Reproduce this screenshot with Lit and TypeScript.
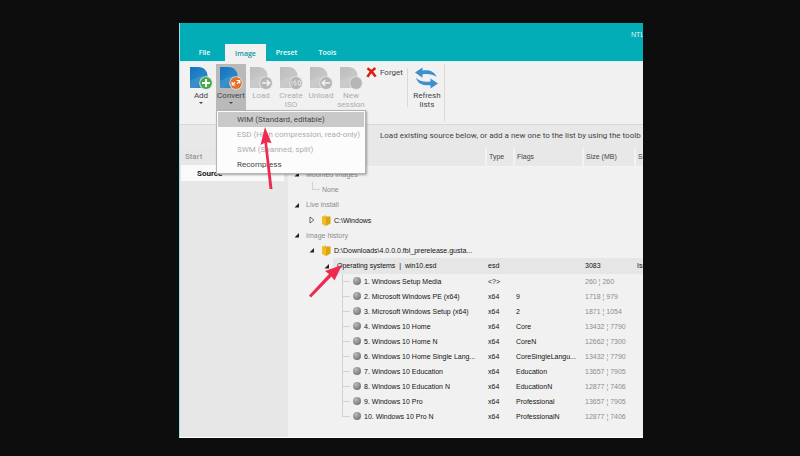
import { LitElement, html, svg, css, nothing } from "lit";
import { customElement } from "lit/decorators.js";
import { classMap } from "lit/directives/class-map.js";

type Row = {
  kind: "group" | "none" | "source" | "set" | "item";
  name: string;
  open?: boolean;
  last?: boolean;
  type?: string;
  flags?: string;
  size?: string;
  extra?: string;
};

const item = (name: string, type: string, flags: string, size: string, last = false): Row => ({
  kind: "item", name, type, flags, size, last,
});

const ROWS: Row[] = [
  { kind: "group", name: "Mounted images", open: true },
  { kind: "none", name: "None" },
  { kind: "group", name: "Live install", open: true },
  { kind: "source", name: "C:\\Windows", open: false },
  { kind: "group", name: "Image history", open: true },
  { kind: "source", name: "D:\\Downloads\\4.0.0.0.fbl_prerelease.gusta...", open: true },
  { kind: "set", name: "Operating systems  |  win10.esd", open: true, type: "esd", size: "3083", extra: "Iso" },
  item("1. Windows Setup Media", "<?>", "", "260 ¦ 260"),
  item("2. Microsoft Windows PE (x64)", "x64", "9", "1718 ¦ 979"),
  item("3. Microsoft Windows Setup (x64)", "x64", "2", "1871 ¦ 1054"),
  item("4. Windows 10 Home", "x64", "Core", "13432 ¦ 7790"),
  item("5. Windows 10 Home N", "x64", "CoreN", "12662 ¦ 7300"),
  item("6. Windows 10 Home Single Lang...", "x64", "CoreSingleLangu...", "13432 ¦ 7790"),
  item("7. Windows 10 Education", "x64", "Education", "13657 ¦ 7905"),
  item("8. Windows 10 Education N", "x64", "EducationN", "12877 ¦ 7406"),
  item("9. Windows 10 Pro", "x64", "Professional", "13657 ¦ 7905"),
  item("10. Windows 10 Pro N", "x64", "ProfessionalN", "12877 ¦ 7406", true),
];

const BADGES: Record<string, unknown> = {
  add: svg`<path d="M16 12v8M12 16h8" stroke="#fff" stroke-width="1.8" />`,
  convert: svg`<path d="M12.500 17.500l2.500-2.300M19.500 14.300l-2.500 2.300M12.200 15v3h3M16.600 13.500h3.200v3" fill="none" stroke="#fff" stroke-width="1.200" />`,
  load: svg`<path d="M12 16h7.5M16.8 13l3 3l-3 3" fill="none" stroke="#f4f4f4" stroke-width="1.4" />`,
  iso: svg`<path d="M12 14v4M16 14h-2v2h2v2h-2M18 14h2.4v4H18z" fill="none" stroke="#eee" stroke-width=".8" />`,
  unload: svg`<path d="M20 16h-7.5M15.2 13l-3 3l3 3" fill="none" stroke="#f4f4f4" stroke-width="1.4" />`,
  session: nothing,
};

const discIcon = (badge: string) => {
  const live = badge === "add" || badge === "convert";
  const round = badge === "add" ? "#45aa48" : badge === "convert" ? "#e5702a" : "#b5b5b5";
  const fade = `fade-${badge}`;
  return html`<svg class="big" viewBox="0 0 23 23" aria-hidden="true">
    <defs>
      <linearGradient id=${fade} x1="0" y1="0" x2="1" y2="1">
        <stop offset="0" stop-color=${live ? "#1673b8" : "#bdbdbd"} />
        <stop offset=".55" stop-color=${live ? "#2485c7" : "#c6c6c6"} />
        <stop offset="1" stop-color=${live ? "#1568aa" : "#bcbcbc"} />
      </linearGradient>
    </defs>
    <path d="M0 0h8.500c5.500 0 9 4 9 9v12H0z" fill="url(#${fade})" />
    <path d="M0 14l8-4l9.500-2v13H0z" fill="#fff" opacity=".1" />
    <circle cx="16" cy="16" r="6.800" fill=${live ? "#d8e4e4" : "#e2e2e2"} />
    <circle cx="16" cy="16" r="5.900" fill=${round} />
    ${BADGES[badge]}
  </svg>`;
};

const refreshIcon = html`<svg class="big" viewBox="0 0 23 23" aria-hidden="true">
  <path d="M0 5.500L7.500 .500v3c6-.8 12 .5 14 6.500c-4-3-8.500-3.300-14-2.700v3.500z" fill="#3f8fcd" />
  <path d="M23 16.500L15.500 11.500v3c-6 .8-11.500 0-14.500-4c1.500 7 8.500 8.300 14.500 7.700v3.300z" fill="#3f8fcd" />
</svg>`;

const crossIcon = html`<svg class="cross" viewBox="0 0 12 12" aria-hidden="true">
  <path d="M1.500 1.500C5 3.500 8 7 10.500 10.500M10.200 1.200C7 3.500 3.500 7 1.500 10.800" fill="none" stroke="#d81e10" stroke-width="2.700" />
</svg>`;

const folderIcon = html`<svg class="folder" viewBox="0 0 9 11" aria-hidden="true">
  <path d="M0 1.500L4 0v9.500L0 9z" fill="#f3cf3e" />
  <path d="M3 1.500h5.500v7L4 11L3 9.500z" fill="#d9a514" />
  <path d="M0 1l4 1.500V11L0 9z" fill="#edbd22" />
</svg>`;

const twisty = (open: boolean) => html`<svg class="twisty" viewBox="0 0 6 8" aria-hidden="true">
  ${open
    ? svg`<path d="M5 2v4.500H.500z" fill="#222" />`
    : svg`<path d="M1 1l3.800 3L1 7z" fill="#fff" stroke="#555" stroke-width=".9" />`}
</svg>`;

const TOOLS = [
  { id: "add", lines: ["Add"], drop: true },
  { id: "convert", lines: ["Convert"], drop: true },
  { id: "load", lines: ["Load"], off: true },
  { id: "iso", lines: ["Create", "ISO"], off: true },
  { id: "unload", lines: ["Unload"], off: true },
  { id: "session", lines: ["New", "session"], off: true },
];

const FORMATS = [
  { label: "WIM (Standard, editable)", active: true },
  { label: "ESD (High compression, read-only)", off: true },
  { label: "SWM (Spanned, split)", off: true },
  { label: "Recompress" },
];

@customElement("app-root")
export class AppRoot extends LitElement {
  static styles = css`
    :host {
      display: flex;
      box-sizing: border-box;
      min-height: 100vh;
      padding: 23px 157px 18px 179px;
      background: #0d0d0d;
      color: #444;
      font: 8px/9px Roboto, "Open Sans", sans-serif;
    }
    * { box-sizing: border-box; }
    button {
      margin: 0;
      padding: 0;
      border: 0;
      background: none;
      color: inherit;
      font: inherit;
      white-space: nowrap;
    }
    .window {
      position: relative;
      display: flex;
      flex-direction: column;
      flex: 1;
      min-width: 0;
      overflow: hidden;
      background: #f1f1f1;
      border-left: 1px solid #9adfe3;
      border-bottom: 1px solid #fff;
    }
    .title {
      display: flex;
      justify-content: space-between;
      height: 39px;
      background: #03adb8;
      border-bottom: 1px solid #d9f6f7;
      color: #e8ffff;
      font: 7px/9px "Open Sans", "Noto Sans", sans-serif;
    }
    .tabs { display: flex; align-items: flex-end; padding-left: 4px; }
    .tab { width: 41px; height: 17px; font-weight: 600; }
    .tab.on { background: #f1f1f1; color: #0a97a3; height: 18px; margin-bottom: -1px; }
    .caption { width: 12px; padding-top: 7px; white-space: nowrap; overflow: hidden; }
    .ribbon { display: flex; height: 62px; padding: 2px 0 2px 6px; }
    .slot { position: relative; width: 30px; height: 46px; }
    .tool {
      display: flex;
      flex-direction: column;
      align-items: center;
      width: 100%;
      height: 100%;
      padding-top: 3px;
    }
    .tool.on { background: #b9b9b9; }
    .tool:disabled, .entry:disabled { color: #adadad; }
    .big { display: block; width: 23px; height: 23px; margin-bottom: 1px; }
    .drop { width: 0; margin-top: 2px; border: 2px solid transparent; border-top-color: #444; }
    .forget {
      display: flex;
      align-items: center;
      gap: 3px;
      height: 13px;
      margin: 2px 4px 0 0;
    }
    .cross { width: 11px; height: 11px; }
    .part { width: 1px; background: #dadada; margin: 4px 4px 15px 0; }
    .part.full { margin: 0 0 0 2px; }
    .menu {
      position: absolute;
      z-index: 2;
      top: 46px;
      left: 0;
      display: flex;
      flex-direction: column;
      width: 150px;
      padding: 1px;
      background: #fcfcfc;
      border: 1px solid #b4b4b4;
      box-shadow: 1px 1px 2px #0005;
    }
    .entry { height: 15px; padding-left: 19px; text-align: left; }
    .entry.on { background: #c9c9c9; }
    .hint {
      height: 24px;
      padding: 6px 0 0 200px;
      background: #e8e8e8;
      border-top: 1px solid #d8d8d8;
      white-space: nowrap;
      overflow: hidden;
    }
    .body { display: flex; flex: 1; }
    .side { width: 108px; flex: none; background: #e7e7e7; }
    .side h2 {
      height: 17px;
      margin: 0;
      padding: 4px 0 0 5px;
      color: #888;
      font: inherit;
    }
    .page {
      display: block;
      width: 103px;
      height: 16px;
      margin-left: 1px;
      padding-left: 16px;
      background: #fafafa;
      color: #222;
      font-weight: 700;
      text-align: left;
    }
    .main { flex: 1; min-width: 0; overflow: hidden; }
    table {
      width: 100%;
      table-layout: fixed;
      border-collapse: collapse;
      font: 7px/9px "Liberation Sans", Arial, sans-serif;
      color: #111;
    }
    th {
      height: 18px;
      padding: 0 0 1px 2px;
      background: #e8e8e8;
      border-right: 2px solid #f3f3f3;
      border-bottom: 1px solid #f3f3f3;
      color: #444;
      font-weight: 400;
      text-align: left;
    }
    th:last-child { border-right: 0; }
    .c-name { width: 198px; }
    .c-type { width: 28px; }
    .c-flags { width: 69px; }
    .c-size { width: 52px; }
    td { height: 15px; padding: 0 0 0 2px; white-space: pre; }
    .tall td { height: 16px; }
    .set td { background: #e6e6e6; }
    .set td:first-child {
      background: linear-gradient(90deg, transparent 45px, #e6e6e6 45px);
    }
    .size { color: #8c8c8c; }
    .set .size { color: #111; }
    td.name { padding: 0; }
    .cell { display: flex; align-items: center; height: 15px; gap: 3px; }
    .cell > * { flex: none; }
    .group .cell { padding-left: 6px; gap: 6px; color: #8c8c8c; }
    .none .cell { padding-left: 24px; gap: 2px; color: #8c8c8c; }
    .source .cell { padding-left: 21px; }
    .set .cell { padding-left: 36px; gap: 7px; }
    .item .cell { padding-left: 54px; }
    .twisty { width: 6px; height: 8px; }
    .folder { width: 9px; height: 11px; margin-left: 4px; }
    .branch {
      align-self: stretch;
      width: 8px;
      border-left: 1px solid #d2d2d2;
      background: linear-gradient(#d2d2d2, #d2d2d2) left center / 7px 1px no-repeat;
    }
    .branch.end {
      height: 8px;
      align-self: flex-start;
      border-bottom: 1px solid #d2d2d2;
      background: none;
    }
    .disc {
      width: 8px;
      height: 8px;
      border-radius: 50%;
      background: radial-gradient(circle at 35% 30%, #bbb, #777 75%);
    }
    .marks {
      position: absolute;
      z-index: 3;
      top: 0;
      left: 0;
      width: 463px;
      height: 414px;
      pointer-events: none;
    }
  `;

  private tool(t: (typeof TOOLS)[number]) {
    const on = t.id === "convert";
    return html`<div class="slot">
      <button class=${classMap({ tool: true, on })} ?disabled=${!!t.off}>
        ${discIcon(t.id)} ${t.lines.map((l) => html`<span>${l}</span>`)}
        ${t.drop ? html`<span class="drop"></span>` : nothing}
      </button>
      ${on
        ? html`<div class="menu" role="menu">
            ${FORMATS.map(
              (f) => html`<button role="menuitem" class=${classMap({ entry: true, on: !!f.active })}
                ?disabled=${!!f.off}>${f.label}</button>`,
            )}
          </div>`
        : nothing}
    </div>`;
  }

  private row(r: Row) {
    const tall = r.kind === "set" || r.name === "Live install";
    const lead =
      r.kind === "item"
        ? html`<span class=${classMap({ branch: true, end: !!r.last })}></span><span class="disc"></span>`
        : r.kind === "none"
          ? html`<span class="branch end"></span>`
          : twisty(!!r.open);
    return html`<tr class=${classMap({ [r.kind]: true, tall })}>
      <td class="name"><div class="cell">${lead}${r.kind === "source" ? folderIcon : nothing}<span>${r.name}</span></div></td>
      <td>${r.type}</td>
      <td>${r.flags}</td>
      <td class="size">${r.size}</td>
      <td>${r.extra}</td>
    </tr>`;
  }

  render() {
    return html`<div class="window">
      <header class="title">
        <nav class="tabs">
          ${["File", "Image", "Preset", "Tools"].map(
            (t) => html`<button class=${classMap({ tab: true, on: t === "Image" })}>${t}</button>`,
          )}
        </nav>
        <span class="caption">NTL</span>
      </header>
      <div class="ribbon">
        ${TOOLS.map((t) => this.tool(t))}
        <button class="forget">${crossIcon}<span>Forget</span></button>
        <span class="part"></span>
        <div class="slot">
          <button class="tool">${refreshIcon}<span>Refresh</span><span>lists</span></button>
        </div>
        <span class="part full"></span>
      </div>
      <div class="hint">Load existing source below, or add a new one to the list by using the toolb</div>
      <div class="body">
        <aside class="side">
          <h2>Start</h2>
          <button class="page">Source</button>
        </aside>
        <main class="main">
          <table>
            <thead>
              <tr>
                <th class="c-name" aria-label="Name"></th>
                <th class="c-type">Type</th>
                <th class="c-flags">Flags</th>
                <th class="c-size">Size (MB)</th>
                <th>S</th>
              </tr>
            </thead>
            <tbody>${ROWS.map((r) => this.row(r))}</tbody>
          </table>
        </main>
      </div>
      <svg class="marks" viewBox="180 23 463 414" aria-hidden="true">
        <path d="M265 127l6.500 16l-4.500-.8L272.500 189h-3L264.500 143l-4 2z" fill="#ee2a50" />
        <path d="M342 265l-7.500 15.500l-3-4L311 297.500l-2-2L329 274l-4-3z" fill="#ee2a50" />
      </svg>
    </div>`;
  }
}
